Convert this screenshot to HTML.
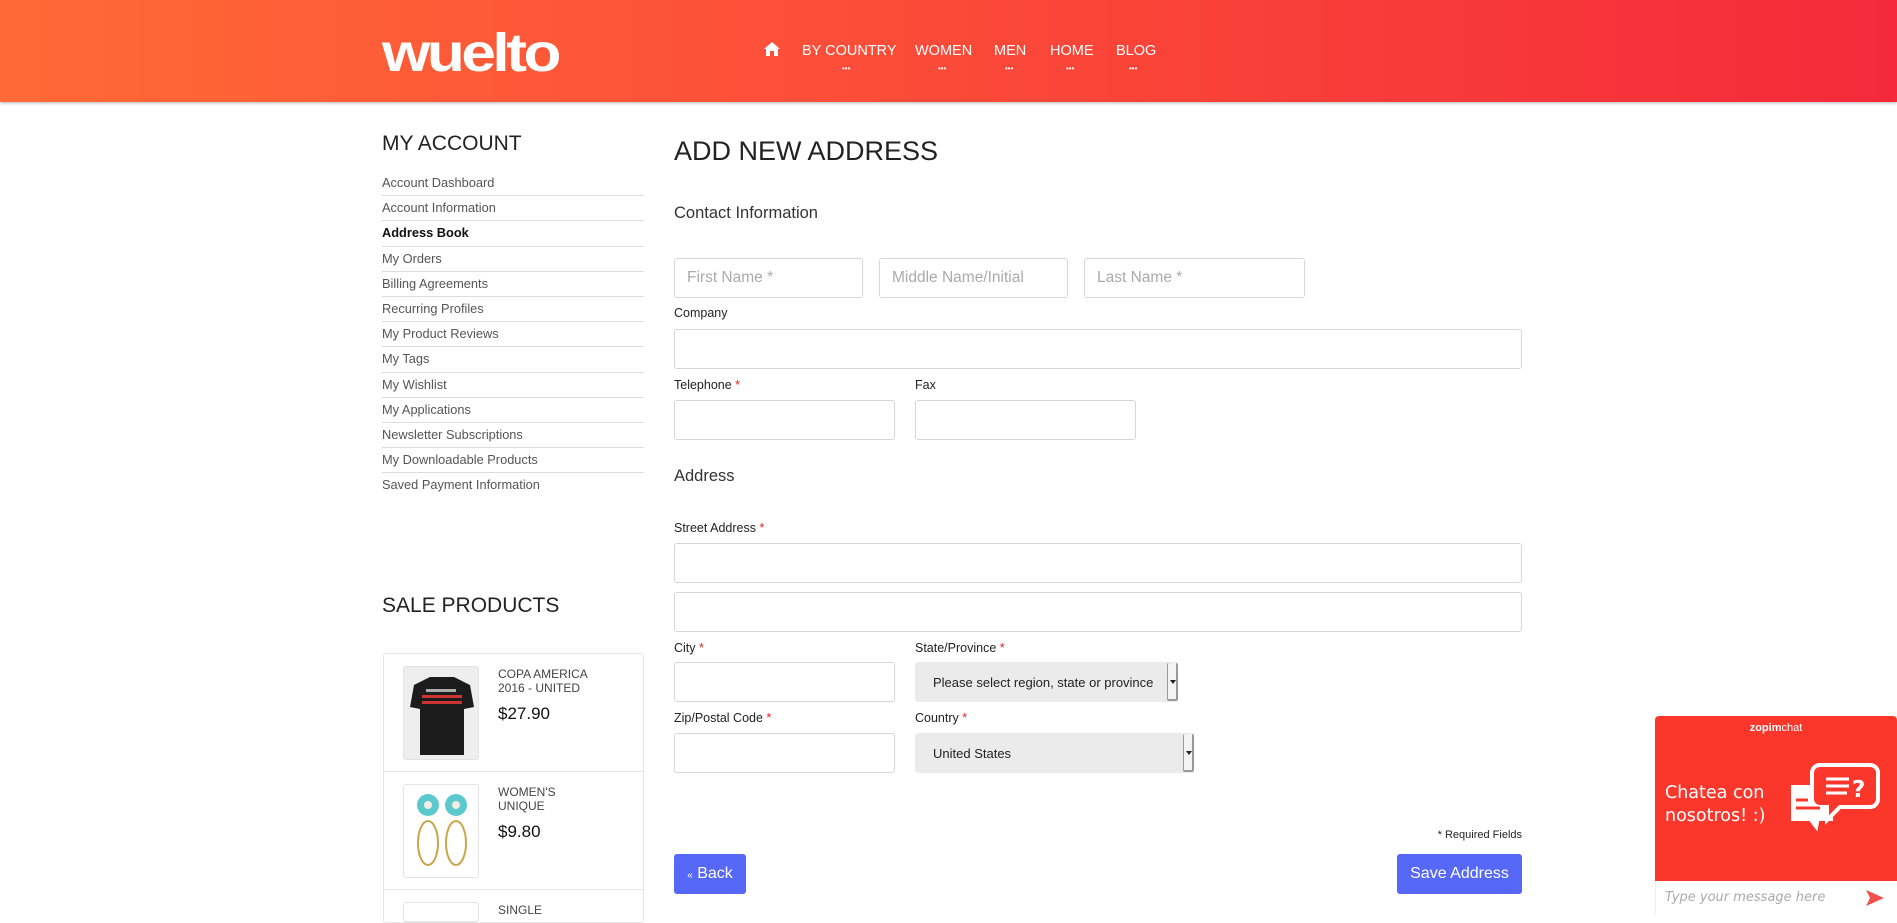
<!DOCTYPE html>
<html><head><meta charset="utf-8"><style>
*{margin:0;padding:0;box-sizing:border-box}
body{width:1897px;height:914px;overflow:hidden;background:#fff;font-family:"Liberation Sans",sans-serif;color:#222;position:relative}
.a{position:absolute}
.hdr{left:0;top:0;width:1897px;height:102px;background:linear-gradient(90deg,#ff6a36 0%,#fb4a38 50%,#f42a3a 100%);box-shadow:0 1px 3px rgba(0,0,0,.3)}
.logo{left:382px;top:22px;font:bold 54px "Liberation Sans",sans-serif;color:#fff;letter-spacing:-3px;transform:scaleX(1.15);transform-origin:left}
.nav{top:43px;color:#fff;font-size:14.5px;white-space:nowrap}
.dots{top:64px;color:#fff;font-size:8px;letter-spacing:0}
.side a{display:block;color:#555;font-size:12.8px;height:25.2px;line-height:24px;border-bottom:1px solid #ddd;text-decoration:none}
.side a.b{font-weight:bold;color:#111}
h2{font-weight:normal}
.inp{position:absolute;border:1px solid #d6d6d6;border-radius:3px;background:#fff;height:40px;color:#aaa;font-size:15.5px;padding:10px 12px;white-space:nowrap}
.lbl{position:absolute;font-size:12.5px;color:#222}
.lbl i{color:#e41d1d;font-style:normal}
.sel{position:absolute;background:#ebebeb;border-radius:3px;height:40px;font-size:13px;color:#222;padding:13px 18px;white-space:nowrap}
.sel b{position:absolute;right:0;top:1px;width:11px;height:38px;background:#f3f3f3;border:1px solid #999;border-width:0 2px 2px 1px;border-radius:2px}
.sel b:after{content:"";position:absolute;left:2px;top:17px;border:3px solid transparent;border-top:4px solid #222}
.btn{position:absolute;background:#5668f7;color:#fff;border-radius:3px;font-size:16px;text-align:center;line-height:40px;height:40px}
.prod{font-size:12px;color:#444;line-height:14px}
.price{font-size:17px;color:#111}
</style></head><body>
<div class="a hdr"></div>
<div class="a logo">wuelto</div>
<svg class="a" style="left:764px;top:42px" width="16" height="14" viewBox="0 0 16 14"><path d="M8 0 L16 7 L14 7 L14 14 L10 14 L10 9 L6 9 L6 14 L2 14 L2 7 L0 7Z" fill="#fff"/></svg>
<div class="a nav" style="left:802px">BY COUNTRY</div><div class="a dots" style="left:842px">•••</div>
<div class="a nav" style="left:915px">WOMEN</div><div class="a dots" style="left:938px">•••</div>
<div class="a nav" style="left:994px">MEN</div><div class="a dots" style="left:1005px">•••</div>
<div class="a nav" style="left:1050px">HOME</div><div class="a dots" style="left:1066px">•••</div>
<div class="a nav" style="left:1116px">BLOG</div><div class="a dots" style="left:1129px">•••</div>

<h2 class="a" style="left:382px;top:132px;font-size:21px;color:#222">MY ACCOUNT</h2>
<div class="a side" style="left:382px;top:171px;width:262px">
<a>Account Dashboard</a><a>Account Information</a><a class="b">Address Book</a><a>My Orders</a><a>Billing Agreements</a><a>Recurring Profiles</a><a>My Product Reviews</a><a>My Tags</a><a>My Wishlist</a><a>My Applications</a><a>Newsletter Subscriptions</a><a>My Downloadable Products</a><a style="border:none">Saved Payment Information</a>
</div>
<h2 class="a" style="left:382px;top:594px;font-size:21px;color:#222">SALE PRODUCTS</h2>
<div class="a" style="left:383px;top:653px;width:261px;height:270px;border:1px solid #e6e6e6;border-radius:3px"></div>
<div class="a" style="left:384px;top:771px;width:259px;border-top:1px solid #e6e6e6"></div>
<div class="a" style="left:384px;top:889px;width:259px;border-top:1px solid #e6e6e6"></div>
<div class="a" style="left:403px;top:666px;width:76px;height:94px;border:1px solid #e3e3e3;border-radius:3px;background:#eee;overflow:hidden">
<svg width="76" height="94"><path d="M10 18 L26 10 L50 10 L66 18 L70 40 L60 42 L60 88 L16 88 L16 42 L6 40Z" fill="#1c1c1c"/><rect x="18" y="28" width="40" height="3" fill="#c33"/><rect x="18" y="34" width="40" height="3" fill="#c33"/><rect x="22" y="22" width="30" height="3" fill="#aaa"/></svg></div>
<div class="a" style="left:403px;top:784px;width:76px;height:94px;border:1px solid #e3e3e3;border-radius:3px;background:#fff">
<svg width="76" height="94"><circle cx="24" cy="20" r="11" fill="#5cc9cf"/><circle cx="52" cy="20" r="11" fill="#5cc9cf"/><circle cx="24" cy="20" r="4" fill="#f3efe2"/><circle cx="52" cy="20" r="4" fill="#f3efe2"/><ellipse cx="24" cy="58" rx="10" ry="22" fill="none" stroke="#c9a64a" stroke-width="2"/><ellipse cx="52" cy="58" rx="10" ry="22" fill="none" stroke="#c9a64a" stroke-width="2"/></svg></div>
<div class="a" style="left:403px;top:902px;width:76px;height:20px;border:1px solid #e3e3e3;border-radius:3px"></div>
<div class="a prod" style="left:498px;top:667px">COPA AMERICA<br>2016 - UNITED</div>
<div class="a price" style="left:498px;top:704px">$27.90</div>
<div class="a prod" style="left:498px;top:785px">WOMEN'S<br>UNIQUE</div>
<div class="a price" style="left:498px;top:822px">$9.80</div>
<div class="a prod" style="left:498px;top:903px">SINGLE</div>

<h2 class="a" style="left:674px;top:136px;font-size:27px;color:#222">ADD NEW ADDRESS</h2>
<div class="a" style="left:674px;top:204px;font-size:16.5px;color:#333">Contact Information</div>
<div class="inp" style="left:674px;top:258px;width:189px">First Name *</div>
<div class="inp" style="left:879px;top:258px;width:189px">Middle Name/Initial</div>
<div class="inp" style="left:1084px;top:258px;width:221px">Last Name *</div>
<div class="lbl" style="left:674px;top:306px">Company</div>
<div class="inp" style="left:674px;top:329px;width:848px"></div>
<div class="lbl" style="left:674px;top:378px">Telephone<i> *</i></div>
<div class="inp" style="left:674px;top:400px;width:221px"></div>
<div class="lbl" style="left:915px;top:378px">Fax</div>
<div class="inp" style="left:915px;top:400px;width:221px"></div>
<div class="a" style="left:674px;top:467px;font-size:16.5px;color:#333">Address</div>
<div class="lbl" style="left:674px;top:521px">Street Address<i> *</i></div>
<div class="inp" style="left:674px;top:543px;width:848px"></div>
<div class="inp" style="left:674px;top:592px;width:848px"></div>
<div class="lbl" style="left:674px;top:641px">City<i> *</i></div>
<div class="inp" style="left:674px;top:662px;width:221px"></div>
<div class="lbl" style="left:915px;top:641px">State/Province<i> *</i></div>
<div class="sel" style="left:915px;top:662px;width:263px">Please select region, state or province<b></b></div>
<div class="lbl" style="left:674px;top:711px">Zip/Postal Code<i> *</i></div>
<div class="inp" style="left:674px;top:733px;width:221px"></div>
<div class="lbl" style="left:915px;top:711px">Country<i> *</i></div>
<div class="sel" style="left:915px;top:733px;width:279px">United States<b></b></div>
<div class="a" style="left:1400px;width:122px;text-align:right;top:829px;font-size:11px;color:#222">* Required Fields</div>
<div class="btn" style="left:674px;top:854px;width:72px"><span style="font-size:10px">«</span> Back</div>
<div class="btn" style="left:1397px;top:854px;width:125px">Save Address</div>

<div class="a" style="left:1655px;top:716px;width:242px;height:198px;background:#fb372c;border-radius:4px 4px 0 0"></div>
<div class="a" style="left:1655px;top:722px;width:242px;text-align:center;color:#fff;font-size:11px;font-weight:bold">zopim<span style="font-weight:normal">chat</span></div>
<div class="a" style="left:1665px;top:782px;color:#fff;font-family:'DejaVu Sans',sans-serif;font-size:17.5px;line-height:23px">Chatea con<br>nosotros! :)</div>
<svg class="a" style="left:1786px;top:762px" width="96" height="84" viewBox="0 0 96 84"><path d="M4 22 h44 v38 h-14 l-2 12 l-9 -12 h-19 z" fill="#fff" stroke="#fb372c" stroke-width="2"/><path d="M34 3 h50 a8 8 0 0 1 8 8 v26 a8 8 0 0 1 -8 8 h-30 l-13 13 v-13 h-7 a8 8 0 0 1 -8 -8 v-26 a8 8 0 0 1 8 -8z" fill="#fb372c" stroke="#fff" stroke-width="4"/><path d="M40 17 h23 M40 24 h23 M40 31 h21" stroke="#fff" stroke-width="3"/><text x="66" y="35" fill="#fff" font-size="23" font-weight="bold" font-family="DejaVu Sans">?</text><path d="M10 38 h12 M10 46 h24" stroke="#fb372c" stroke-width="3"/></svg>
<div class="a" style="left:1655px;top:881px;width:242px;height:33px;background:#fff;border-left:1px solid #eee"></div>
<div class="a" style="left:1665px;top:890px;color:#aaa;font-style:italic;font-size:13px;font-family:'DejaVu Sans',sans-serif">Type your message here</div>
<svg class="a" style="left:1866px;top:890px" width="18" height="16" viewBox="0 0 18 16"><path d="M0 0 L18 8 L0 16 L4 8Z" fill="#f0524a"/></svg>
</body></html>
